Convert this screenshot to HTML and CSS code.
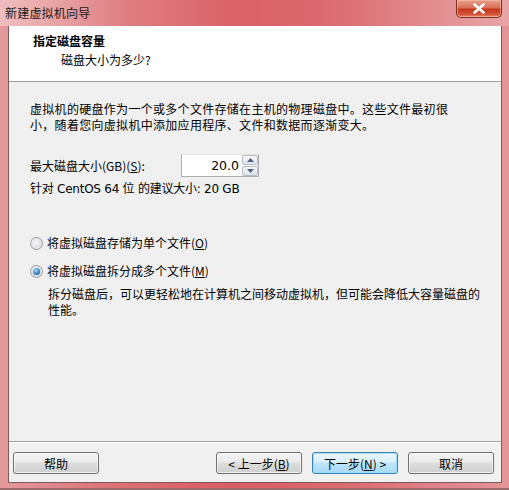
FILE: index.html
```html
<!DOCTYPE html>
<html lang="zh-CN">
<head>
<meta charset="utf-8">
<title>新建虚拟机向导</title>
<link rel="stylesheet" href="styles.css">
</head>
<body>
<div class="window">
  <div class="titlebar">
    <span class="title">新建虚拟机向导</span>
    <div class="close"><svg width="14" height="11" viewBox="0 0 14 11"><path d="M2.5 1.5 L11.5 9.5 M11.5 1.5 L2.5 9.5" stroke="#fff" stroke-width="2.6" stroke-linecap="round"/></svg></div>
  </div>
  <div class="client">
    <div class="header">
      <div class="h-title">指定磁盘容量</div>
      <div class="h-sub">磁盘大小为多少?</div>
    </div>
    <div class="body">
      <p class="para">虚拟机的硬盘作为一个或多个文件存储在主机的物理磁盘中。这些文件最初很<br>小，随着您向虚拟机中添加应用程序、文件和数据而逐渐变大。</p>
      <div class="size-row">
        <span class="label">最大磁盘大小(GB)(<u>S</u>):</span>
        <div class="spin">
          <span class="spin-val">20.0</span>
          <div class="spin-btns">
            <div class="sb"><svg width="7" height="4" viewBox="0 0 7 4"><path d="M0 4 L3.5 0 L7 4 Z" fill="#4d6185"/></svg></div>
            <div class="sb"><svg width="7" height="4" viewBox="0 0 7 4"><path d="M0 0 L3.5 4 L7 0 Z" fill="#4d6185"/></svg></div>
          </div>
        </div>
      </div>
      <div class="hint">针对 CentOS 64 位 的建议大小: 20 GB</div>
      <div class="radio-row r1"><span class="radio"></span><span>将虚拟磁盘存储为单个文件(<u>O</u>)</span></div>
      <div class="radio-row r2"><span class="radio checked"></span><span>将虚拟磁盘拆分成多个文件(<u>M</u>)</span></div>
      <p class="desc">拆分磁盘后，可以更轻松地在计算机之间移动虚拟机，但可能会降低大容量磁盘的<br>性能。</p>
    </div>
    <div class="footer">
      <button class="btn">帮助</button>
      <div class="spacer"></div>
      <button class="btn">&lt; 上一步(<u>B</u>)</button>
      <button class="btn default">下一步(<u>N</u>) &gt;</button>
      <button class="btn">取消</button>
    </div>
  </div>
</div>
</body>
</html>
```
FILE: styles.css
```css
* { box-sizing: border-box; }
html, body { margin: 0; padding: 0; }
body {
  width: 509px;
  height: 490px;
  overflow: hidden;
  font-family: "Noto Sans CJK SC", "DejaVu Sans", sans-serif;
  font-size: 12px;
  color: #000;
  background: #fff;
}
.window {
  width: 509px;
  height: 490px;
  display: flex;
  flex-direction: column;
  background: linear-gradient(90deg, #e39a9b 0%, #dc7478 20%, #d95c63 45%, #dc6d73 70%, #e39597 100%);
  border-bottom: 2px solid #9a6a6c;
  padding: 0 7px 5px 8px;
}
.titlebar {
  height: 26px;
  flex: none;
  display: flex;
  align-items: flex-start;
  justify-content: space-between;
  background: linear-gradient(90deg, rgba(255,230,230,0.45) 0%, rgba(255,255,255,0.1) 25%, rgba(255,255,255,0) 60%, rgba(255,255,255,0.15) 100%);
  margin: 0 -7px 0 -8px;
  padding: 0 7px 0 5px;
}
.title {
  line-height: 16px;
  margin-top: 5px;
  color: #1a1a1a;
  letter-spacing: 0.2px;
}
.close {
  width: 46px;
  height: 18px;
  border: 1px solid #7b3026;
  border-top: none;
  border-radius: 0 0 5px 5px;
  background: linear-gradient(180deg, #e8a08d 0%, #d9705a 45%, #c5381c 55%, #d4553a 85%, #e98f6c 100%);
  box-shadow: inset 0 0 0 1px rgba(255,200,180,0.5);
  display: flex;
  align-items: center;
  justify-content: center;
}
.client {
  flex: 1;
  display: flex;
  flex-direction: column;
  background: #f0f0f0;
  border: 1px solid #7c5b5d;
  border-top: none;
}
.header {
  height: 56px;
  flex: none;
  background: #fff;
  border-bottom: 1px solid #a0a0a0;
  padding: 7px 0 0 24px;
}
.h-title {
  font-weight: bold;
  line-height: 16px;
}
.h-sub {
  line-height: 16px;
  margin-top: 3px;
  padding-left: 28px;
}
.body {
  flex: 1;
  padding: 19px 0 0 21px;
}
.para {
  margin: 0;
  line-height: 16px;
  letter-spacing: 0.3px;
}
.size-row {
  display: flex;
  align-items: center;
  margin-top: 21px;
}
.label {
  width: 151px;
  line-height: 16px;
}
.spin {
  width: 78px;
  height: 23px;
  border: 1px solid #abadb3;
  border-top-color: #e3e3e3;
  background: #fff;
  display: flex;
  align-items: center;
  justify-content: flex-end;
}
.spin-val {
  font-family: "DejaVu Sans", sans-serif;
  font-size: 12.5px;
  padding-right: 3px;
}
.spin-btns {
  width: 16px;
  height: 21px;
  display: flex;
  flex-direction: column;
  gap: 1px;
}
.sb {
  flex: 1;
  border: 1px solid #b6bcc6;
  border-radius: 2px;
  background: linear-gradient(180deg, #f7f8fa, #dfe3ea);
  display: flex;
  align-items: center;
  justify-content: center;
}
.hint {
  font-family: "DejaVu Sans", "Noto Sans CJK SC", sans-serif;
  line-height: 16px;
  margin-top: 4px;
  letter-spacing: -0.25px;
}
.radio-row {
  display: flex;
  align-items: center;
  line-height: 16px;
  gap: 4px;
}
.r1 { margin-top: 38px; }
.r2 { margin-top: 12px; }
.radio {
  width: 13px;
  height: 13px;
  border-radius: 50%;
  border: 1px solid #97a0aa;
  background: radial-gradient(circle at 40% 40%, #f6f6f6, #d4d4d4);
  position: relative;
  flex: none;
}
.radio.checked::after {
  content: "";
  position: absolute;
  left: 2px;
  top: 2px;
  width: 7px;
  height: 7px;
  border-radius: 50%;
  background: radial-gradient(circle at 40% 35%, #a9e0ff, #1a6bb3 70%, #174e8c);
}
.desc {
  margin: 7px 0 0 18px;
  line-height: 16px;
}
.footer {
  flex: none;
  border-top: 1px solid #a0a0a0;
  box-shadow: inset 0 1px 0 #fff;
  padding: 10px 7px 8px 4px;
  display: flex;
  gap: 10px;
}
.spacer { flex: 1; }
.btn {
  width: 86px;
  height: 22px;
  padding: 0;
  font-family: "Noto Sans CJK SC", "DejaVu Sans", sans-serif;
  font-size: 12px;
  color: #000;
  border: 1px solid #707070;
  border-radius: 3px;
  background: linear-gradient(180deg, #f2f2f2 0%, #ebebeb 45%, #dddddd 50%, #cfcfcf 100%);
  box-shadow: inset 0 0 0 1px rgba(255,255,255,0.7);
}
.btn.default {
  border-color: #3c7fb1;
  background: linear-gradient(180deg, #eaf6fd 0%, #d9f0fc 45%, #bee6fd 50%, #a7d9f5 100%);
  box-shadow: inset 0 0 0 1px rgba(150,220,255,0.8);
}
```
